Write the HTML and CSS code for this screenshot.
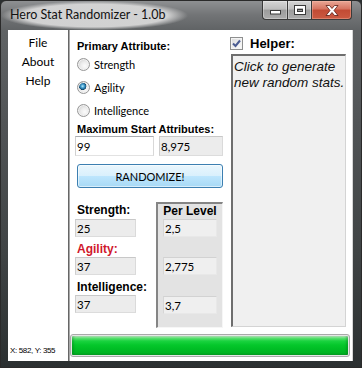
FILE: index.html
```html
<!DOCTYPE html>
<html>
<head>
<meta charset="utf-8">
<link rel="stylesheet" href="styles.css">
</head>
<body>
<div class="window">
  <div class="titlebar">
    <div class="title">Hero Stat Randomizer - 1.0b</div>
    <div class="caption">
      <div class="cbtn min"><svg width="11" height="5" viewBox="0 0 11 5"><rect x="0.5" y="0.5" width="10" height="3.5" fill="#fff" stroke="#3a3a3a"/></svg></div>
      <div class="cbtn max"><svg width="12" height="10" viewBox="0 0 12 10"><rect x="0.5" y="0.5" width="11" height="9" fill="none" stroke="#3a3a3a"/><rect x="2" y="2" width="8" height="6" fill="none" stroke="#fff" stroke-width="2"/><rect x="3.5" y="4.5" width="5" height="2" fill="none" stroke="#3a3a3a" stroke-width="1"/></svg></div>
      <div class="cbtn close"><svg width="14" height="11" viewBox="0 0 14 11"><path d="M1 0.5 H4.5 L7 3.5 L9.5 0.5 H13 L9 5.5 L13 10.5 H9.5 L7 7.5 L4.5 10.5 H1 L5 5.5 Z" fill="#fff" stroke="#5a1a10" stroke-width="0.8" stroke-linejoin="round"/></svg></div>
    </div>
  </div>
  <div class="client">
    <div class="sidebar">
      <div class="menu">
        <div>File</div>
        <div>About</div>
        <div>Help</div>
      </div>
      <div class="status">X: 582, Y: 355</div>
    </div>
    <div class="main">
      <div class="main-body">
        <div class="form">
          <div class="lbl">Primary Attribute:</div>
          <div class="radio-row"><span class="radio"></span><span>Strength</span></div>
          <div class="radio-row"><span class="radio checked"></span><span>Agility</span></div>
          <div class="radio-row"><span class="radio"></span><span>Intelligence</span></div>
          <div class="lbl">Maximum Start Attributes:</div>
          <div class="box-row">
            <div class="tb tb-white box-max">99</div>
            <div class="tb tb-ro box-total">8,975</div>
          </div>
          <button class="randomize">RANDOMIZE!</button>
          <div class="stats">
            <div class="stat-col">
              <div class="stat-label first">Strength:</div>
              <div class="tb tb-ro stat-box">25</div>
              <div class="stat-label agi">Agility:</div>
              <div class="tb tb-ro stat-box">37</div>
              <div class="stat-label">Intelligence:</div>
              <div class="tb tb-ro stat-box">37</div>
            </div>
            <div class="per-level">
              <div class="pl-head">Per Level</div>
              <div class="tb tb-pl pl-box pl-1">2,5</div>
              <div class="tb tb-pl pl-box pl-2">2,775</div>
              <div class="tb tb-pl pl-box pl-3">3,7</div>
            </div>
          </div>
        </div>
        <div class="helper">
          <div class="check-row">
            <span class="checkbox"><svg width="11" height="11" viewBox="0 0 11 11"><path d="M2 5.5 L4.5 8 L9 2.5" fill="none" stroke="#4b5c92" stroke-width="2"/></svg></span>
            <span class="helper-label">Helper:</span>
          </div>
          <div class="helper-box">Click to generate<br>new random stats.</div>
        </div>
      </div>
      <div class="progress"><div class="progress-fill"></div></div>
    </div>
  </div>
</div>
</body>
</html>
```
FILE: styles.css
```css
html, body {
  margin: 0;
  padding: 0;
}
body {
  width: 362px;
  height: 368px;
  overflow: hidden;
  background: #2b2f30;
}
.window {
  width: 362px;
  height: 368px;
  box-sizing: border-box;
  display: flex;
  flex-direction: column;
  border: 1px solid #2a2a2a;
  border-radius: 6px 6px 0 0;
  background: linear-gradient(180deg, #8e9092 0, #727476 14px, #5f6264 30px, #515456 120px, #404445 250px, #2a2f30 368px);
}
.titlebar {
  height: 29px;
  display: flex;
  justify-content: space-between;
  align-items: flex-start;
}
.title {
  margin: 0;
  padding: 6px 22px 8px 9px;
  font-family: Lato, "Noto Sans", sans-serif;
  font-size: 12.5px;
  line-height: 15px;
  color: #111;
  background: radial-gradient(ellipse closest-side, rgba(215, 215, 215, 0.95) 78%, rgba(215, 215, 215, 0) 100%);
}
.caption {
  display: flex;
  margin-right: 9px;
  height: 19px;
}
.cbtn {
  box-sizing: border-box;
  height: 19px;
  display: flex;
  align-items: center;
  justify-content: center;
  border: 1px solid #3a3a3a;
  border-top: none;
}
.min {
  width: 25px;
  border-right: none;
  border-radius: 0 0 0 4px;
  align-items: flex-end;
  padding-bottom: 4px;
}
.max {
  width: 24px;
  border-right: none;
}
.min, .max {
  background: linear-gradient(180deg, #d6d6d6 0%, #bdbdbd 45%, #9c9c9c 50%, #acacac 100%);
  box-shadow: inset 0 0 0 1px rgba(255, 255, 255, 0.3);
}
.close {
  width: 41px;
  border-radius: 0 0 4px 0;
  background: linear-gradient(180deg, #e9a796 0%, #d5735f 45%, #c24b34 50%, #cb5a41 100%);
  box-shadow: inset 0 0 0 1px rgba(255, 200, 180, 0.35);
}
.client {
  flex: 1;
  display: flex;
  margin: 0 8px 6px 7px;
  background: #fff;
}
.sidebar {
  width: 60px;
  display: flex;
  flex-direction: column;
}
.menu {
  padding-top: 3px;
  font-family: Lato, "Noto Sans", sans-serif;
  font-size: 12px;
  line-height: 19px;
  text-align: center;
  color: #000;
}
.status {
  margin-top: auto;
  padding: 0 0 5px 2px;
  font-family: "Liberation Sans", Arial, sans-serif;
  font-size: 8px;
  letter-spacing: -0.35px;
  line-height: 10px;
  color: #000;
  white-space: nowrap;
}
.main {
  flex: 1;
  display: flex;
  flex-direction: column;
  border-left: 1px solid #666;
  border-right: 1px solid #d6d6d6;
  box-shadow: inset 1px 0 0 #a9a9a9;
}
.main-body {
  display: flex;
  padding: 0 6px;
}
.form {
  width: 148px;
  padding-top: 9px;
  display: flex;
  flex-direction: column;
}
.lbl {
  font-family: "Liberation Sans", Arial, sans-serif;
  font-weight: bold;
  font-size: 11px;
  line-height: 14px;
  padding-left: 2px;
  color: #000;
  white-space: nowrap;
}
.radio-row {
  height: 23px;
  display: flex;
  align-items: center;
  padding-left: 2px;
  font-family: Lato, "Noto Sans", sans-serif;
  font-size: 11px;
  color: #000;
}
.radio {
  width: 13px;
  height: 13px;
  box-sizing: border-box;
  border-radius: 50%;
  margin-right: 4px;
  border: 1px solid #979797;
  background: radial-gradient(circle at 62% 62%, #fbfbfb 0, #ececec 40%, #cdcdcd 85%);
  box-shadow: inset 0 0 0 1px #f2f2f2;
}
.radio.checked {
  background:
    radial-gradient(circle at 42% 38%, #b9ecfb 0, #4aa3d2 1.6px, #1d6795 3px, #123f5c 3.6px, rgba(18, 63, 92, 0) 4px),
    radial-gradient(circle at 62% 62%, #fbfbfb 0, #ececec 40%, #cdcdcd 85%);
}
.box-row {
  display: flex;
  gap: 5px;
  height: 20px;
}
.tb {
  box-sizing: border-box;
  border: 1px solid #cfcfcf;
  font-family: Lato, "Noto Sans", sans-serif;
  font-size: 11.5px;
  color: #000;
  padding-left: 1px;
  display: flex;
  align-items: center;
}
.tb-white {
  background: #fff;
  border-color: #a9abb0 #d8d8d8 #e2e2e2 #d0d0d0;
}
.tb-ro {
  background: #ececec;
  border-color: #c8c8c8 #dadada #dcdcdc #cecece;
}
.box-max {
  width: 79px;
}
.box-total {
  width: 64px;
}
.randomize {
  margin: 8px 0 0 2px;
  width: 146px;
  height: 24px;
  padding: 0;
  border: 1px solid #3c7fb1;
  border-radius: 3px;
  background: linear-gradient(180deg, #eaf6fd 0%, #d9f0fc 50%, #bee6fd 50%, #a7d9f5 100%);
  box-shadow: inset 0 0 0 1px rgba(255, 255, 255, 0.55);
  font-family: Lato, "Noto Sans", sans-serif;
  font-size: 11px;
  color: #000;
}
.stats {
  margin-top: 14px;
  display: flex;
}
.stat-col {
  width: 61px;
  display: flex;
  flex-direction: column;
}
.stat-label {
  margin-top: 5px;
  height: 15px;
  line-height: 15px;
  padding-left: 2px;
  font-family: "Liberation Sans", Arial, sans-serif;
  font-weight: bold;
  font-size: 12px;
  color: #000;
  white-space: nowrap;
}
.stat-label.first {
  margin-top: 0;
  height: 16px;
  line-height: 16px;
}
.stat-label.agi {
  color: #d0182c;
}
.stat-box {
  margin-top: 1px;
  height: 18px;
}
.stat-label + .stat-box {
  margin-top: 0;
}
.stat-label.first + .stat-box,
.stat-label:last-of-type + .stat-box {
  margin-top: 1px;
}
.per-level {
  margin-left: 20px;
  width: 67px;
  height: 126px;
  box-sizing: border-box;
  border-style: solid;
  border-width: 2px 1px 1px 2px;
  border-color: #858585 #f6f6f6 #f6f6f6 #858585;
  background: #e3e3e3;
  padding: 0 5px 0 5px;
  display: flex;
  flex-direction: column;
}
.pl-head {
  height: 14px;
  line-height: 14px;
  text-align: center;
  font-family: "Liberation Sans", Arial, sans-serif;
  font-weight: bold;
  font-size: 12px;
  color: #000;
  white-space: nowrap;
}
.tb-pl {
  background: #efefef;
  border-color: #d2d2d2 #e8e8e8 #e8e8e8 #d6d6d6;
}
.pl-box {
  height: 18px;
  width: 54px;
}
.pl-1 {
  margin-top: 1px;
}
.pl-2 {
  margin-top: 20px;
}
.pl-3 {
  margin-top: 21px;
}
.helper {
  width: 116px;
  margin-left: 7px;
  padding-top: 6px;
  display: flex;
  flex-direction: column;
}
.check-row {
  height: 14px;
  display: flex;
  align-items: center;
}
.checkbox {
  width: 13px;
  height: 13px;
  box-sizing: border-box;
  border: 1px solid #8e8f8f;
  background: linear-gradient(135deg, #d9d9d9 0%, #f0f0f0 60%, #fdfdfd 100%);
  box-shadow: inset 0 0 0 1px #f4f4f4;
  display: flex;
  align-items: center;
  justify-content: center;
}
.checkbox svg {
  display: block;
}
.helper-label {
  margin-left: 7px;
  font-family: "Liberation Sans", Arial, sans-serif;
  font-weight: bold;
  font-size: 13px;
  color: #000;
}
.helper-box {
  margin: 4px 0 0 1px;
  width: 115px;
  height: 273px;
  box-sizing: border-box;
  border-style: solid;
  border-width: 2px 1px 1px 2px;
  border-color: #6e6e6e #d4d4d4 #d4d4d4 #6e6e6e;
  background: #f0f0f0;
  padding: 3px 0 0 1px;
  font-family: "Liberation Sans", Arial, sans-serif;
  font-style: italic;
  font-size: 13.5px;
  line-height: 16px;
  color: #111;
  white-space: nowrap;
}
.progress {
  margin: auto 2px 4px 1px;
  height: 23px;
  box-sizing: border-box;
  border: 1px solid #a9a9a9;
  border-radius: 3px;
  background: #e6e6e6;
  padding: 1px;
  display: flex;
}
.progress-fill {
  flex: 1;
  border-radius: 1px;
  background: linear-gradient(180deg, #cdf3d2 0, #5fe073 2px, #1ad33f 5px, #05c72b 9px, #00bd25 13px, #00b322 17px, #07a526 19px);
  box-shadow: inset 2px 0 2px rgba(0, 90, 20, 0.25), inset -2px 0 2px rgba(0, 90, 20, 0.25);
}
```
